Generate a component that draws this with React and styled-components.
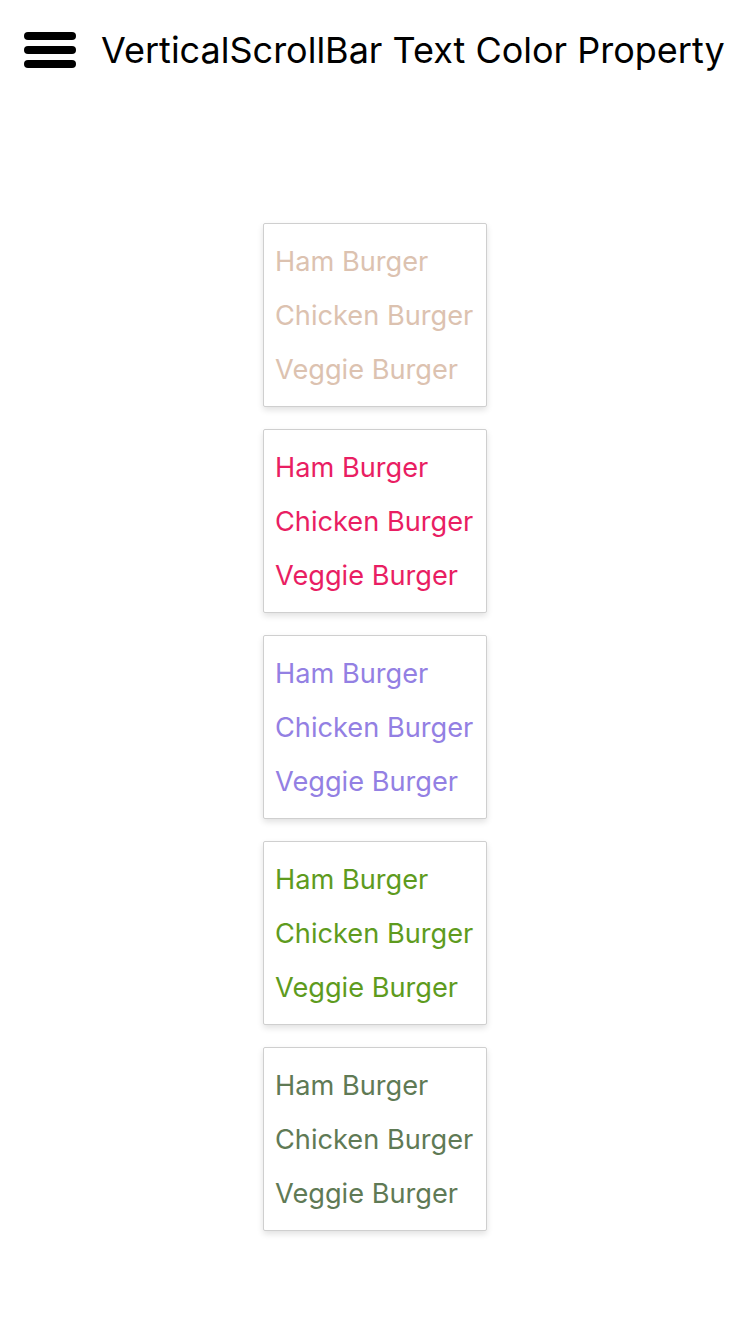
import React from "react";
import styled, { createGlobalStyle } from "styled-components";

const Global = createGlobalStyle`
  html, body { margin: 0; padding: 0; background: #fff; }
  body { font-family: Inter, Roboto, "Noto Sans", sans-serif; }
`;

const Page = styled.div`
  width: 750px;
  min-height: 1334px;
  background: #fff;
`;

const Header = styled.header`
  height: 100px;
  display: flex;
  align-items: center;
  padding: 0 0 0 24px;
  gap: 25px;
  box-sizing: border-box;
`;

const MenuIcon = styled.svg`
  width: 52px;
  height: 40px;
  flex: none;
`;

const Title = styled.h1`
  margin: 0;
  font-family: Inter, Roboto, "Noto Sans", sans-serif;
  font-weight: 400;
  font-size: 36px;
  color: #000;
  white-space: nowrap;
`;

const List = styled.main`
  display: flex;
  flex-direction: column;
  align-items: center;
  gap: 22px;
  padding-top: 123px;
`;

const Box = styled.div`
  width: 224px;
  box-sizing: border-box;
  border: 1px solid #cfcfcf;
  border-radius: 2px;
  padding: 11px 11px 9px;
  box-shadow: 0 3px 6px rgba(0, 0, 0, 0.12);
  background: #fff;
`;

const Item = styled.div`
  font-family: Inter, Roboto, "Noto Sans", sans-serif;
  font-size: 27.2px;
  line-height: 54px;
  color: ${(p) => p.$color};
  white-space: nowrap;
`;

const colors = ["#dcc2b0", "#e91e63", "#9380e3", "#5e9b1e", "#5f7a55"];
const items = ["Ham Burger", "Chicken Burger", "Veggie Burger"];

export default function App() {
  return (
    <Page>
      <Global />
      <Header>
        <MenuIcon viewBox="0 0 52 40">
          <g stroke="#000" strokeWidth="8" strokeLinecap="round">
            <line x1="4" y1="6" x2="48" y2="6" />
            <line x1="4" y1="20" x2="48" y2="20" />
            <line x1="4" y1="34" x2="48" y2="34" />
          </g>
        </MenuIcon>
        <Title>VerticalScrollBar Text Color Property</Title>
      </Header>
      <List>
        {colors.map((c) => (
          <Box key={c}>
            {items.map((t) => (
              <Item key={t} $color={c}>
                {t}
              </Item>
            ))}
          </Box>
        ))}
      </List>
    </Page>
  );
}
